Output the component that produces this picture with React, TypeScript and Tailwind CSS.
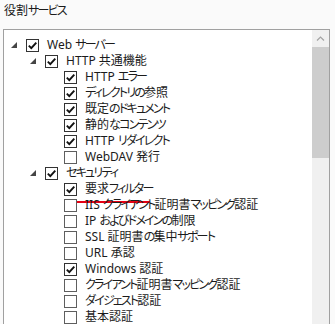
import React from "react";

type Item = { level: number; label: string; checked: boolean; expanded?: boolean; mark?: boolean };

const items: Item[] = [
  { level: 0, label: "Web サーバー", checked: true, expanded: true },
  { level: 1, label: "HTTP 共通機能", checked: true, expanded: true },
  { level: 2, label: "HTTP エラー", checked: true },
  { level: 2, label: "ディレクトリの参照", checked: true },
  { level: 2, label: "既定のドキュメント", checked: true },
  { level: 2, label: "静的なコンテンツ", checked: true },
  { level: 2, label: "HTTP リダイレクト", checked: true },
  { level: 2, label: "WebDAV 発行", checked: false },
  { level: 1, label: "セキュリティ", checked: true, expanded: true },
  { level: 2, label: "要求フィルター", checked: true, mark: true },
  { level: 2, label: "IIS クライアント証明書マッピング認証", checked: false },
  { level: 2, label: "IP およびドメインの制限", checked: false },
  { level: 2, label: "SSL 証明書の集中サポート", checked: false },
  { level: 2, label: "URL 承認", checked: false },
  { level: 2, label: "Windows 認証", checked: true },
  { level: 2, label: "クライアント証明書マッピング認証", checked: false },
  { level: 2, label: "ダイジェスト認証", checked: false },
  { level: 2, label: "基本認証", checked: false },
];

const padByLevel = ["pl-[7px]", "pl-[26px]", "pl-[45px]"];

function Label({ text }: { text: string }) {
  const parts = text.split(/([\u3040-\u30ff]+)/).filter((p) => p.length > 0);
  return (
    <>
      {parts.map((p, i) =>
        /[\u3040-\u30ff]/.test(p) ? (
          <span key={i} className="tracking-[-1.8px]">
            {p}
          </span>
        ) : (
          <span key={i}>{p}</span>
        )
      )}
    </>
  );
}

function Box({ checked }: { checked: boolean }) {
  return (
    <div
      className={
        "w-[13px] h-[13px] shrink-0 bg-white border " +
        (checked ? "border-[#333333]" : "border-[#5e5e5e]")
      }
    >
      {checked && (
        <svg width="11" height="11" viewBox="0 0 11 11" className="block">
          <path d="M1.8 5.6 L4.3 8.1 L9.3 2.6" fill="none" stroke="#111" strokeWidth="1.9" />
        </svg>
      )}
    </div>
  );
}

export default function App() {
  return (
    <div className="w-[335px] h-[324px] overflow-hidden bg-[#fafafa] text-[#1b1b1b] font-['Noto_Sans','Noto_Sans_CJK_JP',sans-serif] [font-feature-settings:'palt']">
      <div className="h-[29px] pl-[4px] pt-[3px] text-[12px] leading-[16px]">
        <Label text="役割サービス" />
      </div>
      <div className="ml-[3px] w-[327px] h-[400px] border border-[#a0a0a0] bg-white flex">
        <div className="flex-1 pt-[7px] text-[12px]">
          {items.map((it, i) => (
            <div key={i} className={"flex items-center h-[16px] " + padByLevel[it.level]}>
              <div className="w-[15px] h-[16px] shrink-0 flex items-center">
                {it.expanded && (
                  <svg width="6" height="6" viewBox="0 0 6 6" className="block">
                    <polygon points="6,0 6,6 0,6" fill="#454545" />
                  </svg>
                )}
              </div>
              <Box checked={it.checked} />
              <span className="relative ml-[8px] leading-[16px] whitespace-nowrap">
                <Label text={it.label} />
                {it.mark && (
                  <span className="absolute left-[-8px] top-[20px] w-[73px] h-[2px] bg-[#e60012]" />
                )}
              </span>
            </div>
          ))}
        </div>
        <div className="w-[17px] shrink-0 bg-[#f0f0f0] flex flex-col">
          <div className="h-[17px] flex items-center justify-center">
            <svg width="9" height="6" viewBox="0 0 9 6" className="block">
              <path d="M1 4.5 L4.5 1 L8 4.5" fill="none" stroke="#a3a3a3" strokeWidth="1.2" />
            </svg>
          </div>
          <div className="h-[111px] bg-[#cdcdcd]" />
        </div>
      </div>
    </div>
  );
}
